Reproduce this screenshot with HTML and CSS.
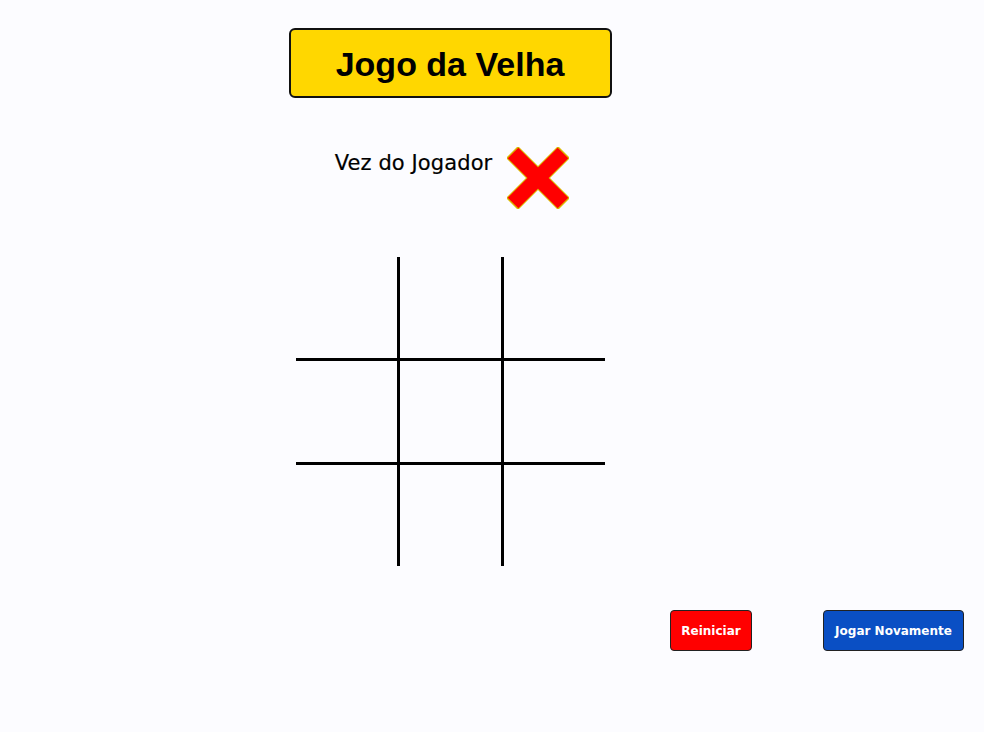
FILE: index.html
```html
<!DOCTYPE html>
<html lang="pt-BR">
<head>
<meta charset="utf-8">
<title>Jogo da Velha</title>
<link rel="stylesheet" href="styles.css">
</head>
<body>
<div class="page">
  <main class="game">
    <h1 class="title">Jogo da Velha</h1>
    <div class="turn">
      <span class="turn-label">Vez do Jogador</span>
      <svg class="turn-icon" width="62" height="62" viewBox="0 0 62 62" aria-hidden="true">
        <g stroke="#d9b800" stroke-width="17" stroke-linecap="butt">
          <line x1="5" y1="5" x2="57" y2="57"/>
          <line x1="57" y1="5" x2="5" y2="57"/>
        </g>
        <g stroke="#ff0000" stroke-width="15" stroke-linecap="butt">
          <line x1="6" y1="6" x2="56" y2="56"/>
          <line x1="56" y1="6" x2="6" y2="56"/>
        </g>
      </svg>
    </div>
    <div class="board">
      <div class="cell"></div><div class="cell"></div><div class="cell"></div>
      <div class="cell"></div><div class="cell"></div><div class="cell"></div>
      <div class="cell"></div><div class="cell"></div><div class="cell"></div>
    </div>
  </main>
  <div class="controls">
    <button class="btn btn-reset">Reiniciar</button>
    <button class="btn btn-again">Jogar Novamente</button>
  </div>
</div>
</body>
</html>
```
FILE: styles.css
```css
html, body {
  margin: 0;
  padding: 0;
  background: #fcfcff;
}
.page {
  width: 984px;
  height: 732px;
  display: flex;
  flex-direction: column;
}
.game {
  width: 900px;
  display: flex;
  flex-direction: column;
  align-items: center;
  padding-top: 28px;
}
.title {
  box-sizing: border-box;
  width: 323px;
  height: 70px;
  margin: 0;
  background: #ffd700;
  border: 2px solid #111;
  border-radius: 6px;
  display: flex;
  align-items: center;
  justify-content: center;
  font-family: "Liberation Sans", Arial, sans-serif;
  font-weight: bold;
  font-size: 34px;
  color: #000;
  padding-top: 2px;
}
.turn {
  display: flex;
  align-items: center;
  gap: 15px;
  margin-top: 49px;
  padding-left: 4px;
}
.turn-label {
  font-family: "DejaVu Sans", sans-serif;
  font-size: 21px;
  letter-spacing: 0.1px;
  color: #000;
  margin-bottom: 30px;
  -webkit-text-stroke: 0.2px #000;
}
.turn-icon {
  display: block;
}
.board {
  margin-top: 48px;
  display: grid;
  grid-template-columns: repeat(3, 101px);
  grid-template-rows: repeat(3, 101px);
  gap: 3px;
  background: #000;
  margin-left: 1px;
}
.cell {
  background: #fcfcff;
}
.controls {
  display: flex;
  justify-content: flex-end;
  gap: 71px;
  padding-right: 20px;
  margin-top: 44px;
}
.btn {
  box-sizing: border-box;
  height: 41px;
  padding: 0 10px;
  border: 1px solid #222;
  border-radius: 4px;
  font-family: "DejaVu Sans", sans-serif;
  font-weight: bold;
  font-size: 12px;
  color: #fff;
  cursor: pointer;
}
.btn-reset {
  background: #ff0000;
  width: 82px;
}
.btn-again {
  background: #0a4fc4;
  width: 141px;
}
```
